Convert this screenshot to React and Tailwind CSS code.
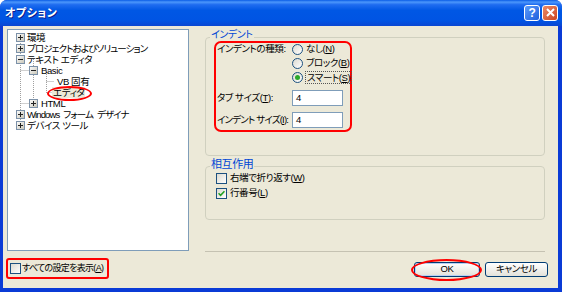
import React from 'react';

const font = "font-['Liberation_Sans','Noto_Sans_CJK_JP',sans-serif] [font-feature-settings:'palt']";

function Acc({ t, k, colon }) {
  return (
    <>
      {t}(<u>{k}</u>){colon ? ':' : ''}
    </>
  );
}

function ExpandBox({ open }) {
  return (
    <svg width="9" height="9" viewBox="0 0 9 9" className="shrink-0 relative">
      <defs>
        <linearGradient id={open ? 'bxo' : 'bxc'} x1="0" y1="0" x2="1" y2="1">
          <stop offset="0" stopColor="#ffffff" />
          <stop offset="1" stopColor="#c6c3b4" />
        </linearGradient>
      </defs>
      <rect x="0.5" y="0.5" width="8" height="8" fill={`url(#${open ? 'bxo' : 'bxc'})`} stroke="#7c91a8" />
      <line x1="2" y1="4.5" x2="7" y2="4.5" stroke="#222" />
      {!open && <line x1="4.5" y1="2" x2="4.5" y2="7" stroke="#222" />}
    </svg>
  );
}

function Radio({ checked }) {
  return (
    <span className="relative w-[11px] h-[11px] shrink-0 rounded-full border border-[#1c5180] bg-gradient-to-br from-[#dcdad0] to-white flex items-center justify-center">
      {checked && <span className="w-[5px] h-[5px] rounded-full bg-[#2ba92b]" />}
    </span>
  );
}

function Check({ checked }) {
  return (
    <span className="w-[11px] h-[11px] shrink-0 border border-[#1c5180] bg-gradient-to-br from-[#dcdad0] to-white flex items-center justify-center">
      {checked && (
        <svg width="7" height="7" viewBox="0 0 7 7">
          <path d="M0.5 3.2 L2.6 5.3 L6.5 1.2" fill="none" stroke="#21a121" strokeWidth="1.6" />
        </svg>
      )}
    </span>
  );
}

const tree = [
  { level: 0, box: 'c', text: '環境' },
  { level: 0, box: 'c', text: 'プロジェクトおよびソリューション', tight: true },
  { level: 0, box: 'o', text: 'テキスト エディタ' },
  { level: 1, box: 'o', text: 'Basic' },
  { level: 2, text: 'VB 固有' },
  { level: 2, text: 'エディタ', selected: true },
  { level: 1, box: 'c', text: 'HTML' },
  { level: 0, box: 'c', text: 'Windows フォーム デザイナ', tight: true },
  { level: 0, box: 'c', text: 'デバイス ツール' },
];

function TreeRow({ item }) {
  if (item.level === 2) {
    return (
      <div className="h-[11px] flex items-center pl-[48px]">
        <span className={`leading-[11px] px-[1px] ${item.selected ? 'bg-[#ece9d8] -ml-[4px]' : ''}`}>{item.text}</span>
      </div>
    );
  }
  return (
    <div className={`h-[11px] flex items-center ${item.level === 0 ? 'pl-[8px] gap-[2px]' : 'pl-[21px] gap-[3px]'}`}>
      <ExpandBox open={item.box === 'o'} />
      {item.tight ? (
        <span className="leading-[11px] whitespace-nowrap tracking-[-0.9px] flex gap-[4px]">
          {item.text.split(' ').map((w, i) => (
            <span key={i}>{w}</span>
          ))}
        </span>
      ) : (
        <span className="leading-[11px] whitespace-pre">{item.text}</span>
      )}
    </div>
  );
}

function Button({ children, primary }) {
  return (
    <div
      className={`h-[15px] rounded-[3px] border border-[#003c74] bg-gradient-to-b from-white to-[#e3e2da] flex items-center justify-center text-black ${
        primary ? 'w-[66px] shadow-[inset_0_0_0_1px_#b8d0f5]' : 'w-[63px]'
      }`}
    >
      {children}
    </div>
  );
}

export default function App() {
  return (
    <div className={`w-[562px] h-[292px] flex flex-col bg-[#0a3bd6] rounded-t-[7px] overflow-hidden text-[9.5px] tracking-[-0.4px] text-black ${font}`}>
      {/* title bar */}
      <div className="h-[26px] shrink-0 flex items-center pl-[5px] pr-[4px] bg-[linear-gradient(to_bottom,#0a5ce6_0%,#4c97fb_8%,#1f6cf0_18%,#0057e4_40%,#0054e3_80%,#0a47d2_100%)]">
        <span className="text-white font-bold text-[11px] [text-shadow:1px_1px_0_#0a1e8c] tracking-[0.5px]">オプション</span>
        <div className="ml-auto flex gap-[2px] mb-[1px]">
          <div className="w-[16px] h-[16px] rounded-[3px] border border-white bg-gradient-to-br from-[#5b9bfb] to-[#1f5fdc] flex items-center justify-center text-white font-bold text-[12px] leading-none">
            ?
          </div>
          <div className="w-[16px] h-[16px] rounded-[3px] border border-white bg-gradient-to-br from-[#ec8a66] to-[#c9431e] flex items-center justify-center">
            <svg width="9" height="9" viewBox="0 0 9 9">
              <path d="M1 1 L8 8 M8 1 L1 8" stroke="white" strokeWidth="2" />
            </svg>
          </div>
        </div>
      </div>

      {/* body */}
      <div className="flex-1 ml-[3px] mr-[4px] mb-[4px] bg-[#ece9d8] flex flex-col">
        <div className="flex pt-[3px]">
          {/* tree */}
          <div className="ml-[4px] w-[182px] h-[222px] border border-[#7f9db9] bg-white relative pt-[2px]">
            <svg className="absolute left-0 top-0" width="180" height="120">
              <g stroke="#a0a0a0" strokeDasharray="1 1" fill="none">
                <line x1="12.5" y1="7" x2="12.5" y2="96" />
                <line x1="25.5" y1="29" x2="25.5" y2="74" />
                <line x1="12.5" y1="40.5" x2="21" y2="40.5" />
                <line x1="12.5" y1="73.5" x2="21" y2="73.5" />
                <line x1="38.5" y1="40" x2="38.5" y2="63" />
                <line x1="38.5" y1="51.5" x2="46" y2="51.5" />
                <line x1="38.5" y1="62.5" x2="44" y2="62.5" />
              </g>
            </svg>
            <div className="relative">
              {tree.map((item, i) => (
                <TreeRow key={i} item={item} />
              ))}
            </div>
            <div className="absolute left-[39px] top-[56px] w-[45px] h-[15px] rounded-[50%] border-2 border-[#ff0000]" />
          </div>

          {/* right pane */}
          <div className="ml-[16px] w-[340px] h-[223px] flex flex-col">
            <div className="mt-[8px] h-[119px] relative border border-[#d0d0bf] rounded-[4px]">
              <span className="absolute -top-[9px] left-[4px] px-[1px] bg-[#ece9d8] text-[#0046d5] text-[10px] leading-[12px]">インデント</span>
              <div className="ml-[8px] mt-[3px] w-[138px] h-[91px] border-2 border-[#ff0000] rounded-[7px]">
                <div className="flex -mt-[1px]">
                  <div className="w-[76px] shrink-0 pl-[1px] h-[14px] flex items-center whitespace-nowrap">インデントの種類:</div>
                  <div className="flex flex-col">
                    <label className="h-[14px] flex items-center gap-[3px] whitespace-nowrap">
                      <Radio />
                      <span><Acc t="なし" k="N" /></span>
                    </label>
                    <label className="h-[14px] flex items-center gap-[3px] whitespace-nowrap">
                      <Radio />
                      <span><Acc t="ブロック" k="B" /></span>
                    </label>
                    <label className="h-[14px] flex items-center gap-[2px] whitespace-nowrap">
                      <Radio checked />
                      <span className="border border-dotted border-[#555] px-[1px] leading-[11px]"><Acc t="スマート" k="S" /></span>
                    </label>
                  </div>
                </div>
                <div className="flex items-center mt-[6px]">
                  <div className="w-[76px] shrink-0 pl-[1px] whitespace-nowrap">タブ サイズ(<u>T</u>):</div>
                  <div className="w-[51px] h-[16px] border border-[#7f9db9] bg-white pl-[3px] flex items-center">4</div>
                </div>
                <div className="flex items-center mt-[6px]">
                  <div className="w-[76px] shrink-0 pl-[1px] whitespace-nowrap tracking-[-0.8px]">インデント サイズ(<u>I</u>):</div>
                  <div className="w-[51px] h-[16px] border border-[#7f9db9] bg-white pl-[3px] flex items-center">4</div>
                </div>
              </div>
            </div>

            <div className="mt-[10px] h-[54px] relative border border-[#d0d0bf] rounded-[4px]">
              <span className="absolute -top-[9px] left-[4px] px-[1px] bg-[#ece9d8] text-[#0046d5] text-[11px] leading-[12px]">相互作用</span>
              <div className="mt-[4px] pl-[10px] flex flex-col">
                <label className="h-[15px] flex items-center gap-[3px]">
                  <Check />
                  <span><Acc t="右端で折り返す" k="W" /></span>
                </label>
                <label className="h-[15px] flex items-center gap-[3px]">
                  <Check checked />
                  <span><Acc t="行番号" k="L" /></span>
                </label>
              </div>
            </div>

            <div className="mt-auto h-px bg-[#c5c2b2]" />
          </div>
        </div>

        {/* bottom row */}
        <div className="flex items-start">
          <div className="ml-[3px] mt-[6px] w-[103px] h-[21px] border-2 border-[#ff0000] rounded-[3px] flex items-center pl-[2px] gap-[1px]">
            <Check />
            <span className="whitespace-nowrap text-[9px] tracking-[-0.7px]"><Acc t="すべての設定を表示" k="A" /></span>
          </div>
          <div className="ml-auto mr-[10px] mt-[10px] flex gap-[5px]">
            <div className="relative">
              <Button primary>OK</Button>
              <div className="absolute -left-[3px] -right-[2px] -top-[3px] -bottom-[4px] rounded-[50%] border-2 border-[#ff0000]" />
            </div>
            <Button>キャンセル</Button>
          </div>
        </div>
      </div>
    </div>
  );
}
